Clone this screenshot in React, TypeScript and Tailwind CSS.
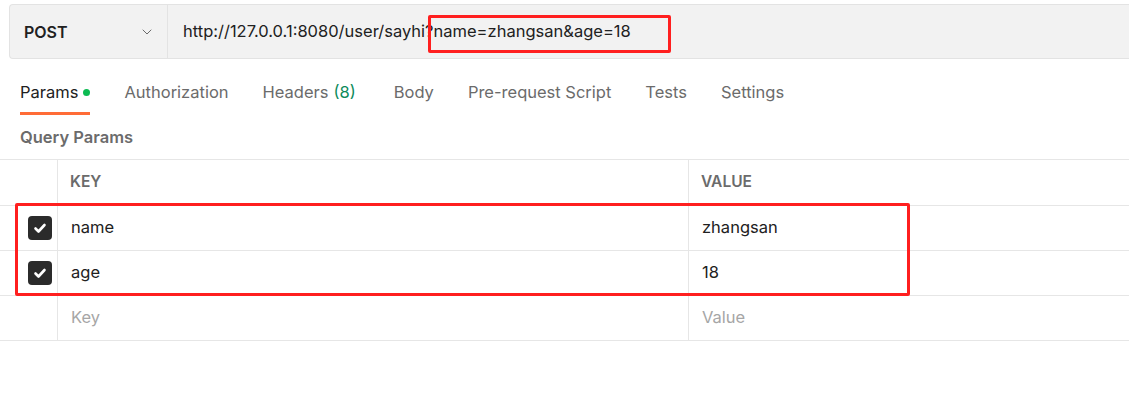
import { ChevronDown } from "lucide-react";

const tabs = [
  { name: "Params", active: true },
  { name: "Authorization" },
  { name: "Headers", count: "(8)" },
  { name: "Body" },
  { name: "Pre-request Script" },
  { name: "Tests" },
  { name: "Settings" },
];

const rows = [
  { key: "name", value: "zhangsan" },
  { key: "age", value: "18" },
];

function Check() {
  return (
    <span className="flex h-6 w-6 shrink-0 items-center justify-center rounded-[4px] bg-[#2b2b2b]">
      <svg viewBox="0 0 16 16" className="h-4 w-4" fill="none" stroke="white" strokeWidth="2.6" strokeLinecap="round" strokeLinejoin="round">
        <path d="M3.5 8.5l3 3 6-6.5" />
      </svg>
    </span>
  );
}

export default function App() {
  return (
    <div className="h-[396px] w-[1129px] overflow-hidden bg-white font-['Inter',sans-serif] text-[#212121]">
      <div className="pl-[9px] pt-[4px]">
        <div className="relative flex h-[55px] items-center rounded-l-[4px] border border-r-0 border-[#e3e3e3] bg-[#f2f2f2]">
          <div className="flex h-full w-[158px] items-center justify-between border-r border-[#e3e3e3] pl-[14px] pr-[12px]">
            <span className="text-[16px] font-semibold">POST</span>
            <ChevronDown className="h-4 w-4 text-[#6b6b6b]" strokeWidth={1.5} />
          </div>
          <span className="pl-[15px] text-[16.5px] text-[#212121]">http://127.0.0.1:8080/user/sayhi?name=zhangsan&amp;age=18</span>
          <div className="absolute left-[418px] top-[10px] h-[38px] w-[243px] rounded-[2px] border-[3px] border-[#ff1f1f]" />
        </div>
      </div>

      <div className="flex gap-[34px] pl-[20px] pt-[21px]">
        {tabs.map((t) => (
          <div key={t.name} className="flex flex-col">
            <div className={"flex items-center text-[16.5px] " + (t.active ? "text-[#212121]" : "text-[#6b6b6b]")}>
              {t.name}
              {t.active && <span className="ml-[5px] h-[7px] w-[7px] rounded-full bg-[#0cbb52]" />}
              {t.count && <span className="ml-[5px] mr-[4px] text-[#0c8a5a]">{t.count}</span>}
            </div>
            <div className={"mt-[7px] h-[3px] " + (t.active ? "bg-[#ff6c37]" : "bg-transparent")} />
          </div>
        ))}
      </div>

      <div className="pl-[20px] pt-[10px] text-[16.5px] font-semibold text-[#6b6b6b]">Query Params</div>

      <div className="relative mt-[9px]">
        <div className="grid grid-cols-[58px_631px_1fr] border-t border-[#e6e6e6]">
          <div className="h-[46px] border-r border-b border-[#e6e6e6]" />
          <div className="flex h-[46px] items-center border-r border-b border-[#e6e6e6] pl-[12px] text-[15.5px] font-semibold text-[#6b6b6b]">KEY</div>
          <div className="flex h-[46px] items-center border-b border-[#e6e6e6] pl-[12px] text-[15.5px] font-semibold text-[#6b6b6b]">VALUE</div>
          {rows.map((r) => (
            <div key={r.key} className="contents">
              <div className="flex h-[45px] items-center border-r border-b border-[#e6e6e6] pl-[28px]">
                <Check />
              </div>
              <div className="flex h-[45px] items-center border-r border-b border-[#e6e6e6] pl-[13px] text-[16.5px]">{r.key}</div>
              <div className="flex h-[45px] items-center border-b border-[#e6e6e6] pl-[13px] text-[16.5px]">{r.value}</div>
            </div>
          ))}
          <div className="h-[45px] border-r border-b border-[#e6e6e6]" />
          <div className="flex h-[45px] items-center border-r border-b border-[#e6e6e6] pl-[13px] text-[16.5px] text-[#a6a6a6]">Key</div>
          <div className="flex h-[45px] items-center border-b border-[#e6e6e6] pl-[13px] text-[16.5px] text-[#a6a6a6]">Value</div>
        </div>
        <div className="absolute left-[15px] top-[44px] h-[93px] w-[895px] rounded-[2px] border-[3px] border-[#ff1f1f]" />
      </div>
    </div>
  );
}
